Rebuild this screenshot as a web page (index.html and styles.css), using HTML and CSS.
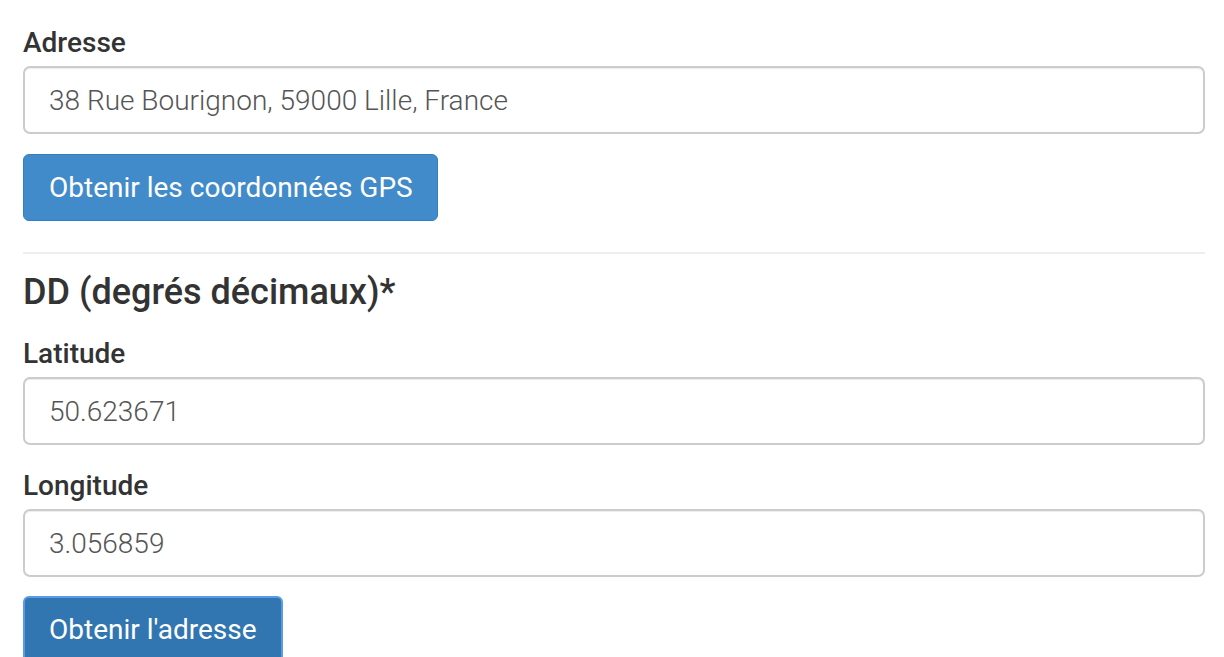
FILE: index.html
```html
<!DOCTYPE html>
<html lang="fr">
<head>
<meta charset="utf-8">
<title>Coordonnées GPS</title>
<link rel="stylesheet" href="styles.css">
</head>
<body>
<form class="form">
  <div class="group group-first">
    <label class="label" for="adresse">Adresse</label>
    <input class="input" id="adresse" type="text" value="38 Rue Bourignon, 59000 Lille, France">
  </div>
  <button type="button" class="btn btn-primary">Obtenir les coordonnées GPS</button>
  <hr class="sep">
  <h3 class="title">DD (degrés décimaux)*</h3>
  <div class="group">
    <label class="label" for="lat">Latitude</label>
    <input class="input" id="lat" type="text" value="50.623671">
  </div>
  <div class="group group-last">
    <label class="label" for="lng">Longitude</label>
    <input class="input" id="lng" type="text" value="3.056859">
  </div>
  <button type="button" class="btn btn-active">Obtenir l'adresse</button>
</form>
</body>
</html>
```
FILE: styles.css
```css
html, body {
  margin: 0;
  padding: 0;
  background: #fff;
}
body {
  font-family: Roboto, "Liberation Sans", Arial, sans-serif;
  color: #333;
}
.form {
  width: 1182px;
  padding: 26px 0 0 23px;
  margin: 0;
}
.group {
  margin-bottom: 24px;
}
.group-first {
  margin-bottom: 20px;
}
.group-last {
  margin-bottom: 19px;
}
.label {
  display: block;
  font-size: 28px;
  line-height: 34px;
  font-weight: 500;
  color: #333;
  margin-bottom: 6px;
}
.input {
  display: block;
  box-sizing: border-box;
  width: 100%;
  height: 68px;
  margin: 0;
  padding: 0 24px;
  border: 2px solid #ccc;
  border-radius: 7px;
  font-family: Roboto, "Liberation Sans", Arial, sans-serif;
  font-size: 28px;
  font-weight: 300;
  color: #555;
  background: #fff;
  box-shadow: inset 0 1px 1px rgba(0,0,0,0.075);
  outline: none;
}
.btn {
  display: block;
  box-sizing: border-box;
  height: 67px;
  margin: 0;
  padding: 0 24px 0 25px;
  border: 1px solid #357ebd;
  border-radius: 6px;
  background: #428bca;
  color: #fff;
  font-family: Roboto, "Liberation Sans", Arial, sans-serif;
  font-size: 28px;
  font-weight: 400;
  cursor: pointer;
}
.btn-active {
  background: #3276b1;
  border: 2px solid #5a9be8;
  padding: 0 24px;
}
.sep {
  margin: 31px 0 0;
  height: 0;
  border: 0;
  border-top: 2px solid #eee;
}
.title {
  margin: 18px 0 25px;
  font-size: 36px;
  line-height: 40px;
  font-weight: 500;
  color: #333;
}
```
